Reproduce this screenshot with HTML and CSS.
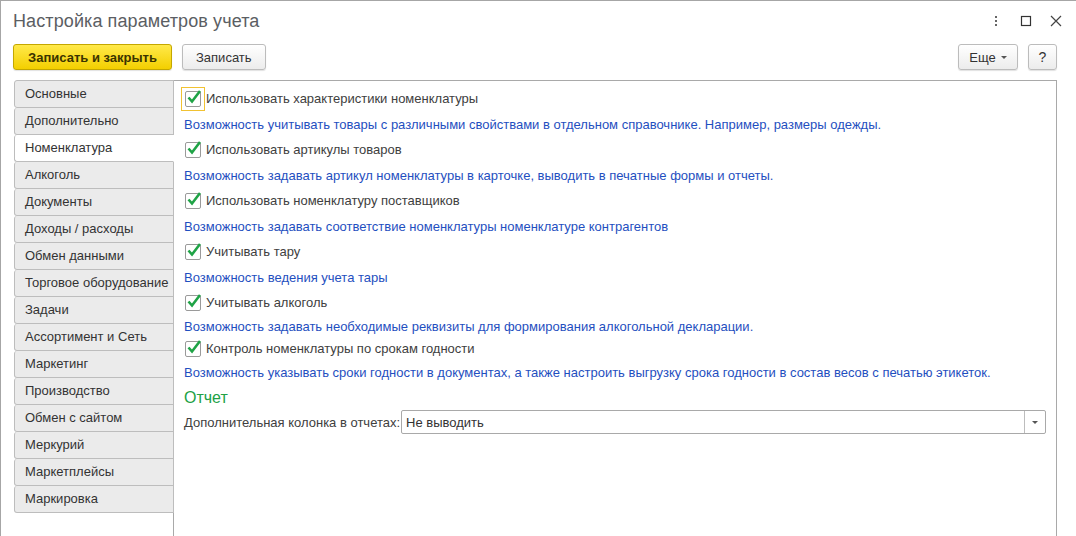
FILE: index.html
```html
<!DOCTYPE html>
<html lang="ru">
<head>
<meta charset="utf-8">
<title>Настройка параметров учета</title>
<link rel="stylesheet" href="styles.css">
</head>
<body>
<div class="window">
  <div class="titlebar">
    <div class="title">Настройка параметров учета</div>
    <div class="win-icons">
      <svg class="wi" width="12" height="14" viewBox="0 0 12 14"><rect x="5" y="2" width="2" height="2" fill="#666"/><rect x="5" y="6" width="2" height="2" fill="#666"/><rect x="5" y="10" width="2" height="2" fill="#666"/></svg>
      <svg class="wi" width="12" height="14" viewBox="0 0 12 14"><rect x="1.5" y="2.5" width="9" height="9" fill="none" stroke="#333" stroke-width="1.2"/></svg>
      <svg class="wi" width="12" height="14" viewBox="0 0 12 14"><path d="M1 2 L11 12 M11 2 L1 12" stroke="#444" stroke-width="1.2"/></svg>
    </div>
  </div>
  <div class="toolbar">
    <button class="btn btn-primary">Записать и закрыть</button>
    <button class="btn">Записать</button>
    <div class="spacer"></div>
    <button class="btn btn-more">Еще <span class="caret"></span></button>
    <button class="btn btn-help">?</button>
  </div>
  <div class="main">
    <div class="tabs">
      <div class="tab">Основные</div>
      <div class="tab">Дополнительно</div>
      <div class="tab active">Номенклатура</div>
      <div class="tab">Алкоголь</div>
      <div class="tab">Документы</div>
      <div class="tab">Доходы / расходы</div>
      <div class="tab">Обмен данными</div>
      <div class="tab">Торговое оборудование</div>
      <div class="tab">Задачи</div>
      <div class="tab">Ассортимент и Сеть</div>
      <div class="tab">Маркетинг</div>
      <div class="tab">Производство</div>
      <div class="tab">Обмен с сайтом</div>
      <div class="tab">Меркурий</div>
      <div class="tab">Маркетплейсы</div>
      <div class="tab">Маркировка</div>
    </div>
    <div class="panel">
      <div class="row cb-row">
        <span class="cb focus"><span class="box"><svg class="chk" width="18" height="18" viewBox="0 0 18 18"><path d="M3.5 8.5 L7 12.5 L15 2" fill="none" stroke="#1fa346" stroke-width="2.6"/></svg></span></span>
        <span class="lbl">Использовать характеристики номенклатуры</span>
      </div>
      <div class="row desc">Возможность учитывать товары с различными свойствами в отдельном справочнике. Например, размеры одежды.</div>
      <div class="row cb-row">
        <span class="cb"><span class="box"><svg class="chk" width="18" height="18" viewBox="0 0 18 18"><path d="M3.5 8.5 L7 12.5 L15 2" fill="none" stroke="#1fa346" stroke-width="2.6"/></svg></span></span>
        <span class="lbl">Использовать артикулы товаров</span>
      </div>
      <div class="row desc">Возможность задавать артикул номенклатуры в карточке, выводить в печатные формы и отчеты.</div>
      <div class="row cb-row">
        <span class="cb"><span class="box"><svg class="chk" width="18" height="18" viewBox="0 0 18 18"><path d="M3.5 8.5 L7 12.5 L15 2" fill="none" stroke="#1fa346" stroke-width="2.6"/></svg></span></span>
        <span class="lbl">Использовать номенклатуру поставщиков</span>
      </div>
      <div class="row desc">Возможность задавать соответствие номенклатуры номенклатуре контрагентов</div>
      <div class="row cb-row">
        <span class="cb"><span class="box"><svg class="chk" width="18" height="18" viewBox="0 0 18 18"><path d="M3.5 8.5 L7 12.5 L15 2" fill="none" stroke="#1fa346" stroke-width="2.6"/></svg></span></span>
        <span class="lbl">Учитывать тару</span>
      </div>
      <div class="row desc">Возможность ведения учета тары</div>
      <div class="row cb-row">
        <span class="cb"><span class="box"><svg class="chk" width="18" height="18" viewBox="0 0 18 18"><path d="M3.5 8.5 L7 12.5 L15 2" fill="none" stroke="#1fa346" stroke-width="2.6"/></svg></span></span>
        <span class="lbl">Учитывать алкоголь</span>
      </div>
      <div class="row desc compact">Возможность задавать необходимые реквизиты для формирования алкогольной декларации.</div>
      <div class="row cb-row compact">
        <span class="cb"><span class="box"><svg class="chk" width="18" height="18" viewBox="0 0 18 18"><path d="M3.5 8.5 L7 12.5 L15 2" fill="none" stroke="#1fa346" stroke-width="2.6"/></svg></span></span>
        <span class="lbl">Контроль номенклатуры по срокам годности</span>
      </div>
      <div class="row desc compact2">Возможность указывать сроки годности в документах, а также настроить выгрузку срока годности в состав весов с печатью этикеток.</div>
      <div class="row group-title">Отчет</div>
      <div class="row field-row">
        <span class="field-lbl">Дополнительная колонка в отчетах:</span>
        <div class="select">
          <span class="select-val">Не выводить</span>
          <span class="select-btn"><span class="caret"></span></span>
        </div>
      </div>
    </div>
  </div>
</div>
</body>
</html>
```

FILE: styles.css
```css
* { box-sizing: border-box; }
html, body { margin: 0; padding: 0; background: #fff; }
body {
  font-family: "Liberation Sans", Arial, sans-serif;
  font-size: 13px;
  color: #404040;
  width: 1076px;
  height: 536px;
  overflow: hidden;
}
.window {
  border-top: 1px solid #a6a6a6;
  border-left: 1px solid #a6a6a6;
  height: 536px;
}
.titlebar {
  display: flex;
  align-items: center;
  height: 41px;
  padding-left: 12px;
  padding-right: 14px;
}
.title {
  flex: 1;
  font-size: 18px;
  color: #5b5e63;
  letter-spacing: 0.1px;
}
.win-icons {
  display: flex;
  gap: 18px;
  align-items: center;
  margin-top: -2px;
}
.toolbar {
  display: flex;
  align-items: center;
  margin-top: 2px;
  padding-left: 12px;
  padding-right: 19px;
  gap: 10px;
  height: 26px;
}
.spacer { flex: 1; }
.btn {
  font-family: "Liberation Sans", Arial, sans-serif;
  font-size: 13px;
  color: #333;
  height: 26px;
  padding: 0 13px;
  border: 1px solid #bcbcbc;
  border-radius: 3px;
  background: linear-gradient(#ffffff, #ececec);
  box-shadow: 0 1px 1px rgba(0,0,0,0.12);
  display: flex;
  align-items: center;
  justify-content: center;
}
.btn-primary {
  width: 159px;
  font-weight: bold;
  color: #3a3300;
  background: linear-gradient(#ffe94a, #f3cf00);
  border-color: #c4a700;
}
.btn-more { width: 60px; padding: 0 8px; gap: 5px; }
.btn-help { width: 29px; padding: 0; font-size: 14px; }
.caret {
  display: inline-block;
  width: 0;
  height: 0;
  border-left: 3px solid transparent;
  border-right: 3px solid transparent;
  border-top: 3px solid #555;
}
.main {
  display: flex;
  margin-top: 10px;
  padding-left: 13px;
}
.tabs {
  width: 160px;
  position: relative;
  z-index: 1;
  display: flex;
  flex-direction: column;
}
.tab {
  height: 27px;
  line-height: 26px;
  padding-left: 10px;
  background: #ebebeb;
  border: 1px solid #bdbdbd;
  border-top: none;
  border-radius: 3px 0 0 3px;
  color: #333;
  white-space: nowrap;
}
.tab:first-child { border-top: 1px solid #bdbdbd; height: 28px; line-height: 26px; }
.tab.active {
  background: #fff;
  border-right-color: #fff;
}
.panel {
  width: 884px;
  height: 470px;
  margin-left: -1px;
  border: 1px solid #a9a9a9;
  border-bottom: none;
  padding: 5px 10px 0 10px;
  display: flex;
  flex-direction: column;
}
.row { display: flex; align-items: center; }
.cb-row { height: 25px; }
.cb-row.compact { height: 23px; }
.desc { height: 26px; color: #1f4fc0; }
.desc.compact { height: 22px; }
.desc.compact2 { height: 25px; }
.cb {
  width: 24px;
  height: 24px;
  margin-left: -3px;
  display: flex;
  align-items: center;
  justify-content: center;
  border: 1px solid transparent;
}
.cb.focus { border-color: #f1c232; }
.box {
  width: 16px;
  height: 16px;
  border: 1px solid #9a9a9a;
  border-radius: 2px;
  background: #fff;
  position: relative;
}
.chk { position: absolute; left: -1px; top: -3px; }
.lbl { margin-left: 1px; color: #404040; }
.group-title {
  height: 25px;
  font-size: 16px;
  color: #21a145;
}
.field-row { height: 24px; }
.field-lbl { width: 217px; color: #404040; }
.select {
  width: 645px;
  height: 24px;
  border: 1px solid #a9a9a9;
  border-radius: 2px;
  display: flex;
  align-items: center;
}
.select-val { flex: 1; padding-left: 4px; color: #333; }
.select-btn {
  width: 21px;
  height: 22px;
  border-left: 1px solid #bdbdbd;
  display: flex;
  align-items: center;
  justify-content: center;
}
```
